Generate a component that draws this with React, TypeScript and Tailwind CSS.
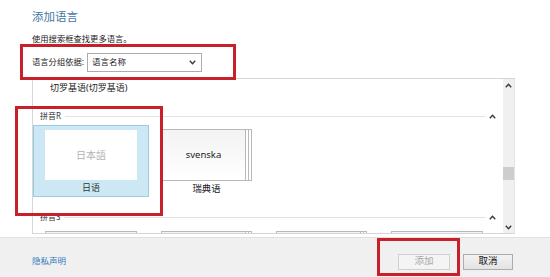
import React from 'react';

const Caret: React.FC<{ up?: boolean; className?: string }> = ({ up = true, className = '' }) => (
  <svg width="7" height="5" viewBox="0 0 7 5" className={className}>
    <polyline
      points={up ? '0.8,4.2 3.5,1.2 6.2,4.2' : '0.8,0.8 3.5,3.8 6.2,0.8'}
      fill="none"
      stroke="#3a3a3a"
      strokeWidth="1.4"
    />
  </svg>
);

const GroupHeader: React.FC<{ label: string; className?: string }> = ({ label, className = '' }) => (
  <div className={`shrink-0 flex items-center h-[12px] pl-[7px] ${className}`}>
    <span className="text-[8px] leading-[12px] text-[#333]">{label}</span>
    <div className="flex-1 h-px bg-[#e2e2e2] ml-[4px]" />
    <Caret className="ml-[3px] mr-[7px]" />
  </div>
);

// plain language tile with the stacked-card edges on the right
const StackTile: React.FC<{ text?: string }> = ({ text }) => (
  <div className="flex h-[52px] shrink-0">
    <div className="w-[85px] h-full border border-[#b8b8b8] bg-gradient-to-b from-[#f3f3f3] to-white flex items-center justify-center">
      {text && <span className="text-[9.5px] text-[#222]">{text}</span>}
    </div>
    <div className="w-[3px] h-full border-y border-r border-[#b8b8b8] bg-white" />
    <div className="w-[3px] h-full border-y border-r border-[#b8b8b8] bg-white" />
  </div>
);

const PlainTile: React.FC = () => (
  <div className="shrink-0 w-[92px] h-[52px] border border-[#b8b8b8] bg-gradient-to-b from-[#f3f3f3] to-white" />
);

export default function App() {
  return (
    <div className="relative w-[550px] h-[277px] overflow-hidden bg-white font-['Noto_Sans','Noto_Sans_CJK_SC',sans-serif] text-[#222]">
      <div className="flex flex-col">
        <div className="mt-[9px] h-[16px] pl-[32px] text-[11.5px] leading-[16px] text-[#4576a3]">添加语言</div>
        <div className="mt-[8px] h-[12px] pl-[32px] text-[8.3px] leading-[12px]">使用搜索框查找更多语言。</div>

        <div className="mt-[7px] h-[20px] pl-[32px] flex items-center">
          <span className="text-[8.3px] leading-[12px]">语言分组依据:</span>
          <div className="ml-[3px] w-[115px] h-[19px] border border-[#acacac] bg-white flex items-center pl-[4px] pr-[5px]">
            <span className="text-[8.5px] leading-[12px] flex-1">语言名称</span>
            <Caret up={false} />
          </div>
        </div>

        {/* language list */}
        <div className="mt-[6px] ml-[32px] w-[483px] h-[156px] border-y border-l border-[#d6d6d6] flex">
          <div className="flex-1 overflow-hidden flex flex-col">
            <div className="shrink-0 h-[18px] pl-[17px] flex items-center text-[9px] leading-[12px]">切罗基语(切罗基语)</div>

            <GroupHeader label="拼音R" className="mt-[13px]" />

            <div className="shrink-0 mt-[3px] flex">
              <div className="w-[116px] h-[72px] bg-[#cde8f5] border border-[#9ccbe0] flex flex-col items-center pt-[4px]">
                <div className="w-[92px] h-[51px] bg-white flex items-center justify-center">
                  <span className="text-[10px] text-[#b3b3b3]">日本語</span>
                </div>
                <div className="h-[16px] flex items-center text-[9px] text-[#333]">日语</div>
              </div>
              <div className="w-[116px] h-[72px] flex flex-col pl-[12px] pt-[4px]">
                <StackTile text="svenska" />
                <div className="h-[16px] w-[91px] flex items-center justify-center text-[9.3px]">瑞典语</div>
              </div>
            </div>

            <GroupHeader label="拼音S" className="mt-[14px]" />

            <div className="shrink-0 mt-[8px] flex pl-[12px] gap-[24px]">
              <PlainTile />
              <StackTile />
              <StackTile />
              <PlainTile />
            </div>
          </div>

          {/* scrollbar */}
          <div className="w-[12px] h-full bg-[#f0f0f0] border-r border-[#e4e4e4] flex flex-col items-center">
            <div className="shrink-0 h-[13px] flex items-center">
              <Caret />
            </div>
            <div className="shrink-0 mt-[75px] w-full h-[13px] bg-[#cdcdcd]" />
            <div className="flex-1" />
            <div className="shrink-0 h-[12px] flex items-center">
              <Caret up={false} />
            </div>
          </div>
        </div>

        {/* footer */}
        <div className="mt-[3px] h-[40px] bg-[#f0f0f0] border-t border-[#e0e0e0] flex items-center pt-[8px] pl-[32px] pr-[37px]">
          <span className="text-[8.5px] text-[#2f78bd]">隐私声明</span>
          <div className="ml-auto flex items-center gap-[13px]">
            <div className="w-[52px] h-[16px] border border-[#d0d0d0] bg-[#f4f4f4] flex items-center justify-center text-[9.5px] text-[#a8a8a8]">添加</div>
            <div className="w-[50px] h-[16px] border border-[#adadad] bg-gradient-to-b from-[#f2f2f2] to-[#e3e3e3] flex items-center justify-center text-[9.5px] text-[#111]">取消</div>
          </div>
        </div>
      </div>

      {/* red annotation boxes */}
      <div className="absolute left-[20px] top-[44px] w-[216px] h-[36px] border-[3px] border-[#c8202a]" />
      <div className="absolute left-[15px] top-[106px] w-[148px] h-[110px] border-[3px] border-[#c8202a]" />
      <div className="absolute left-[377px] top-[238px] w-[83px] h-[38px] border-[3px] border-[#c8202a]" />
    </div>
  );
}
